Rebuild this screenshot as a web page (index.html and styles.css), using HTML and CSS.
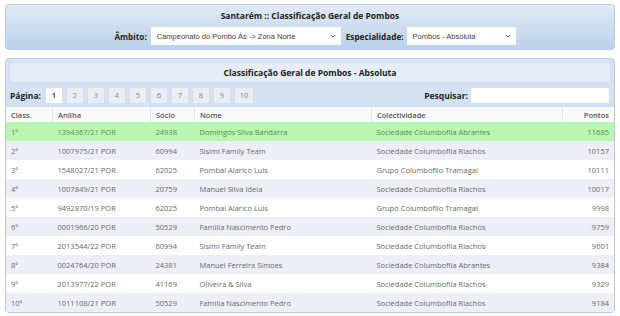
FILE: index.html
```html
<!DOCTYPE html>
<html lang="pt">
<head>
<meta charset="utf-8">
<title>Classificação Geral de Pombos</title>
<link rel="stylesheet" href="styles.css">
</head>
<body>
<div class="top">
  <div class="top-title">Santarém :: Classificação Geral de Pombos</div>
  <div class="filters">
    <label class="flbl">Âmbito:</label>
    <div class="sel sel-wide"><span>Campeonato do Pombo Ás -&gt; Zona Norte</span><svg viewBox="0 0 8 5" class="chev"><path d="M1 1l3 3 3-3" fill="none" stroke="#444" stroke-width="1.2"/></svg></div>
    <label class="flbl flbl2">Especialidade:</label>
    <div class="sel sel-narrow"><span>Pombos - Absoluta</span><svg viewBox="0 0 8 5" class="chev"><path d="M1 1l3 3 3-3" fill="none" stroke="#444" stroke-width="1.2"/></svg></div>
  </div>
</div>

<div class="box">
  <div class="box-head">Classificação Geral de Pombos - Absoluta</div>
  <div class="toolbar">
    <span class="lbl">Página:</span>
    <div class="pages">
      <span class="pg on">1</span><span class="pg">2</span><span class="pg">3</span><span class="pg">4</span><span class="pg">5</span><span class="pg">6</span><span class="pg">7</span><span class="pg">8</span><span class="pg">9</span><span class="pg">10</span>
    </div>
    <span class="lbl search-lbl">Pesquisar:</span>
    <div class="search"></div>
  </div>
  <table class="grid">
    <thead>
      <tr><th class="c1">Class.</th><th class="c2">Anilha</th><th class="c3">Sócio</th><th class="c4">Nome</th><th class="c5">Colectividade</th><th class="c6">Pontos</th></tr>
    </thead>
    <tbody>
      <tr class="hl"><td>1º</td><td>1394367/21 POR</td><td>24938</td><td>Domingos Silva Bandarra</td><td>Sociedade Columbofila Abrantes</td><td class="r">11685</td></tr>
      <tr class="alt"><td>2º</td><td>1007975/21 POR</td><td>60994</td><td>Sisimi Family Team</td><td>Sociedade Columbofila Riachos</td><td class="r">10157</td></tr>
      <tr><td>3º</td><td>1548027/21 POR</td><td>62025</td><td>Pombal Alarico Luis</td><td>Grupo Columbofilo Tramagal</td><td class="r">10111</td></tr>
      <tr class="alt"><td>4º</td><td>1007849/21 POR</td><td>20759</td><td>Manuel Silva Ideia</td><td>Sociedade Columbofila Riachos</td><td class="r">10017</td></tr>
      <tr><td>5º</td><td>9492870/19 POR</td><td>62025</td><td>Pombal Alarico Luis</td><td>Grupo Columbofilo Tramagal</td><td class="r">9998</td></tr>
      <tr class="alt"><td>6º</td><td>0001966/20 POR</td><td>50529</td><td>Familia Nascimento Pedro</td><td>Sociedade Columbofila Riachos</td><td class="r">9759</td></tr>
      <tr><td>7º</td><td>2013544/22 POR</td><td>60994</td><td>Sisimi Family Team</td><td>Sociedade Columbofila Riachos</td><td class="r">9601</td></tr>
      <tr class="alt"><td>8º</td><td>0024764/20 POR</td><td>24381</td><td>Manuel Ferreira Simoes</td><td>Sociedade Columbofila Abrantes</td><td class="r">9384</td></tr>
      <tr><td>9º</td><td>2013977/22 POR</td><td>41169</td><td>Oliveira &amp; Silva</td><td>Sociedade Columbofila Riachos</td><td class="r">9329</td></tr>
      <tr class="alt"><td>10º</td><td>1011108/21 POR</td><td>50529</td><td>Familia Nascimento Pedro</td><td>Sociedade Columbofila Riachos</td><td class="r">9184</td></tr>
    </tbody>
  </table>
</div>
</body>
</html>
```

FILE: styles.css
```css
html, body {
  margin: 0;
  padding: 0;
  background: #ffffff;
}
body {
  padding: 4px 5px 0 5px;
  font-family: "Open Sans", "Noto Sans", sans-serif;
  font-size: 8px;
  color: #333;
  overflow: hidden;
}
.top {
  height: 44px;
  border: 1px solid #b7cbe3;
  border-radius: 4px;
  background: linear-gradient(#e1eaf6, #bad1ec);
  display: flex;
  flex-direction: column;
  align-items: center;
}
.top-title {
  margin-top: 5px;
  font-weight: 700;
  font-size: 8.5px;
  color: #222;
  line-height: 12px;
}
.filters {
  margin-top: 5px;
  padding-left: 10px;
  display: flex;
  align-items: center;
}
.flbl {
  font-weight: 700;
  font-size: 8.2px;
  color: #222;
  margin-right: 4px;
}
.flbl2 { margin-left: 5px; margin-right: 3px; }
.lbl {
  font-weight: 700;
  font-size: 8.5px;
  color: #222;
}
.sel {
  height: 18px;
  background: #fff;
  display: flex;
  align-items: center;
  justify-content: space-between;
  padding: 0 5px 0 6px;
  box-sizing: border-box;
  font-family: "Liberation Sans", Arial, sans-serif;
  font-size: 7.5px;
  color: #444;
}
.sel-wide { width: 190px; }
.sel-narrow { width: 109px; }
.chev { width: 6px; height: 4px; }

.box {
  margin-top: 8px;
  border: 1px solid #b7cbe3;
  border-radius: 4px;
  background: linear-gradient(#d6e3f3, #c0d5ee);
  padding: 3px 0 0 0;
}
.box-head {
  margin: 0 3px;
  height: 19px;
  background: #e4edf8;
  border: 1px solid #d2dff0;
  border-radius: 3px;
  display: flex;
  align-items: center;
  justify-content: center;
  font-weight: 700;
  font-size: 8.5px;
  color: #222;
}
.toolbar {
  display: flex;
  align-items: center;
  height: 24px;
  padding: 0 5px 0 4px;
}
.pages {
  display: flex;
  gap: 3px;
  margin-left: 4px;
}
.pg {
  width: 18px;
  height: 17px;
  display: flex;
  align-items: center;
  justify-content: center;
  background: #e9eef4;
  border: 1px solid #d7dfe9;
  box-sizing: border-box;
  color: #888;
  font-size: 7.5px;
}
.pg:last-child { width: 20px; }
.pg.on {
  background: #fff;
  color: #222;
  font-weight: 600;
}
.search-lbl { margin-left: auto; margin-right: 3px; }
.search {
  width: 138px;
  height: 15px;
  background: #fff;
}

.grid {
  width: 100%;
  border-collapse: collapse;
  background: #fff;
  font-size: 7.5px;
}
.grid th {
  text-align: left;
  font-weight: 600;
  color: #555;
  height: 15px;
  padding: 0 5px;
  border-left: 1px solid #e6e6e6;
  background: #fafafa;
}
.grid th:first-child { border-left: none; }
.grid th.c6 { text-align: right; }
.grid td {
  height: 19px;
  padding: 0 5px;
  color: #6a6a6a;
}
.grid td.r { text-align: right; }
.c1 { width: 36px; }
.c2 { width: 87px; }
.c3 { width: 33px; }
.c4 { width: 166px; }
.c5 { width: 180px; }
.grid tr.alt td { background: #eeeef9; }
.grid tr.hl td { background: #b8f6b2; color: #55914f; }
```
